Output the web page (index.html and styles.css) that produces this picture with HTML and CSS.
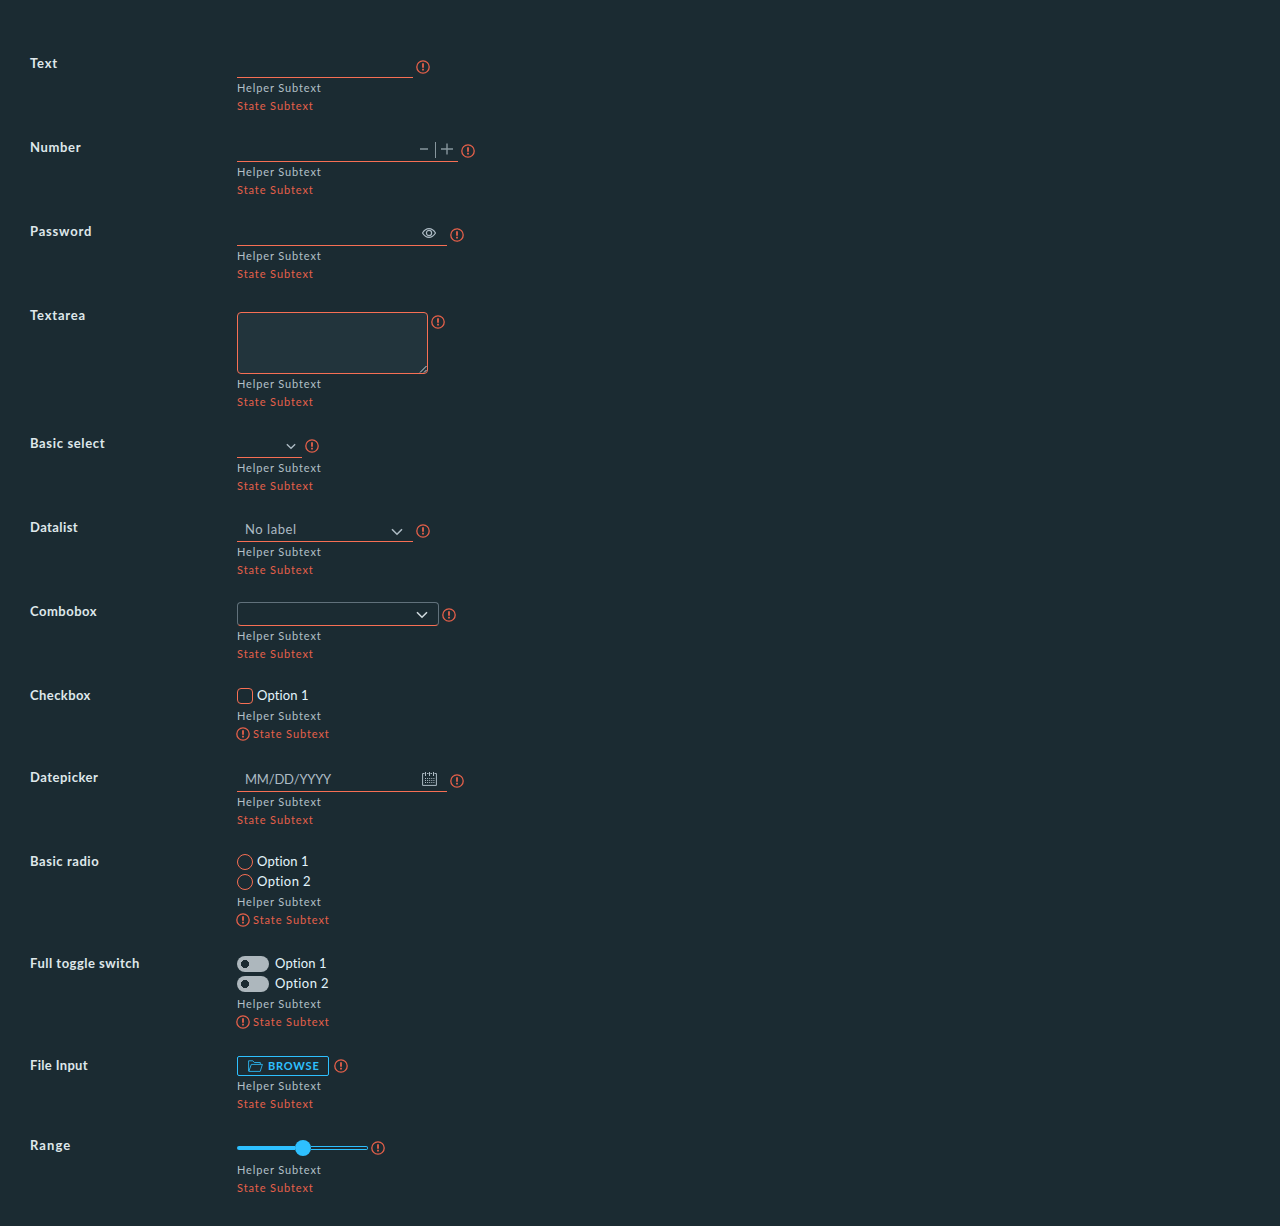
FILE: index.html
```
<!DOCTYPE html>
<html lang="en">
<head>
<meta charset="utf-8">
<title>Form controls</title>
<link rel="stylesheet" href="styles.css">
</head>
<body>
<svg class="defs" aria-hidden="true">
  <symbol id="err" viewBox="0 0 14 14"><circle cx="7" cy="7" r="6.2" fill="none" stroke="currentColor" stroke-width="1.3"/><path d="M6.1 3.3h1.8v4.4H6.1zM6.1 8.8h1.8v1.6H6.1z" fill="currentColor"/></symbol>
  <symbol id="chev" viewBox="0 0 12 8"><path d="M1 1.2l5 5 5-5" fill="none" stroke="currentColor" stroke-width="1.6"/></symbol>
</svg>
<form class="form">
  <div class="row"><label class="label w-text">Text</label><div class="field">
    <div class="control"><div class="input short"></div><svg class="err"><use href="#err"/></svg></div>
    <div class="helper">Helper Subtext</div><div class="state">State Subtext</div></div></div>

  <div class="row"><label class="label w-number">Number</label><div class="field">
    <div class="control"><div class="input number"><svg class="steps" viewBox="0 0 34 16"><path d="M1 7h8M22 7h12M28 1.5v11" fill="none" stroke="currentColor" stroke-width="1.4"/><path d="M16.5 0v16" stroke="currentColor"/></svg></div><svg class="err"><use href="#err"/></svg></div>
    <div class="helper">Helper Subtext</div><div class="state">State Subtext</div></div></div>

  <div class="row"><label class="label w-password">Password</label><div class="field">
    <div class="control"><div class="input wide"><svg class="eye" viewBox="0 0 14 10"><path d="M.5 5Q3.2.6 7 .6T13.500 5Q10.800 9.400 7 9.400T.5 5z" fill="none" stroke="currentColor" stroke-width="1.2"/><circle cx="7" cy="5" r="2.600" fill="none" stroke="currentColor" stroke-width="1.2"/></svg></div><svg class="err"><use href="#err"/></svg></div>
    <div class="helper">Helper Subtext</div><div class="state">State Subtext</div></div></div>

  <div class="row"><label class="label w-textarea">Textarea</label><div class="field">
    <div class="control area"><div class="textarea"><svg class="grip" viewBox="0 0 8 8"><path d="M1 7.500l6.500-6.500M5 7.500l2.500-2.500" stroke="currentColor"/></svg></div><svg class="err"><use href="#err"/></svg></div>
    <div class="helper">Helper Subtext</div><div class="state">State Subtext</div></div></div>

  <div class="row"><label class="label w-select">Basic select</label><div class="field">
    <div class="control"><div class="input select"><svg class="chev small"><use href="#chev"/></svg></div><svg class="err up"><use href="#err"/></svg></div>
    <div class="helper">Helper Subtext</div><div class="state">State Subtext</div></div></div>

  <div class="row"><label class="label w-datalist">Datalist</label><div class="field">
    <div class="control"><div class="input short datalist"><span class="nolabel">No label</span><svg class="chev"><use href="#chev"/></svg></div><svg class="err"><use href="#err"/></svg></div>
    <div class="helper">Helper Subtext</div><div class="state">State Subtext</div></div></div>

  <div class="row"><label class="label w-combobox">Combobox</label><div class="field">
    <div class="control"><div class="combobox"><svg class="chev"><use href="#chev"/></svg></div><svg class="err"><use href="#err"/></svg></div>
    <div class="helper">Helper Subtext</div><div class="state">State Subtext</div></div></div>

  <div class="row loose"><label class="label w-checkbox">Checkbox</label><div class="field">
    <div class="options"><div class="option"><span class="box"></span><span class="opt">Option 1</span></div></div>
    <div class="helper">Helper Subtext</div><div class="state"><svg class="lead"><use href="#err"/></svg>State Subtext</div></div></div>

  <div class="row"><label class="label w-date">Datepicker</label><div class="field">
    <div class="control"><div class="input wide"><span class="datetext">MM/DD/YYYY</span><svg class="calendar" viewBox="0 0 15 14"><path d="M2.500 1.500H.6v11.900h13.800V1.500h-1.900M5 1.500h1.500M8.500 1.500H10M3.500 0v4M7.500 0v4M11.500 0v4" fill="none" stroke="currentColor"/><path d="M3 6.500h9.500M3 8.500h9.500M3 10.500h9.500" stroke="currentColor" stroke-dasharray="1 1.100"/></svg></div><svg class="err"><use href="#err"/></svg></div>
    <div class="helper">Helper Subtext</div><div class="state">State Subtext</div></div></div>

  <div class="row loose"><label class="label w-radio">Basic radio</label><div class="field">
    <div class="options"><div class="option"><span class="box round"></span><span class="opt">Option 1</span></div><div class="option"><span class="box round"></span><span class="opt two">Option 2</span></div></div>
    <div class="helper">Helper Subtext</div><div class="state"><svg class="lead"><use href="#err"/></svg>State Subtext</div></div></div>

  <div class="row loose"><label class="label w-toggle">Full toggle switch</label><div class="field">
    <div class="options"><div class="option wider"><span class="toggle"></span><span class="opt">Option 1</span></div><div class="option wider"><span class="toggle"></span><span class="opt two">Option 2</span></div></div>
    <div class="helper">Helper Subtext</div><div class="state"><svg class="lead"><use href="#err"/></svg>State Subtext</div></div></div>

  <div class="row"><label class="label w-file">File Input</label><div class="field">
    <div class="control file"><div class="browse"><svg class="folder" viewBox="0 0 15 12"><path d="M.6 11V.8h4.200l1.500 1.700h6V4M.8 11.400l2.500-7h11.100l-2.200 7z" fill="none" stroke="currentColor" stroke-width=".85"/></svg><span class="browsetext">BROWSE</span></div><svg class="err"><use href="#err"/></svg></div>
    <div class="helper">Helper Subtext</div><div class="state">State Subtext</div></div></div>

  <div class="row"><label class="label w-range">Range</label><div class="field">
    <div class="control"><div class="range"><span class="fill"></span><span class="thumb"></span><span class="rest"></span></div><svg class="err up"><use href="#err"/></svg></div>
    <div class="helper">Helper Subtext</div><div class="state">State Subtext</div></div></div>
</form>
</body>
</html>
```
FILE: styles.css
```
* { box-sizing: border-box; }
body { margin: 0; min-height: 1226px; background: #1b2b32; color: #e3f5fc; font: 13px/20px Lato, "Open Sans", sans-serif; }
.defs { display: none; }
svg { display: block; flex: none; }
.form { padding: 54px 30px 0; }
.row { display: flex; padding-bottom: 23px; }
.row.loose { padding-bottom: 25px; }
.label { width: 207px; flex: none; font-weight: 700; line-height: 18px; letter-spacing: .5px; color: #dfe7ea; white-space: nowrap; }
.w-text, .w-password, .w-textarea { letter-spacing: .8px; }
.w-number, .w-select { letter-spacing: .65px; }
.w-datalist, .w-checkbox { letter-spacing: .42px; }
.w-radio { letter-spacing: .57px; }
.w-file { letter-spacing: .33px; }
.w-range { letter-spacing: 1.1px; }
.control { display: flex; height: 25px; gap: 3px; align-items: flex-start; }
.control.area { height: 69px; padding-top: 6px; }
.control.file { height: 21px; gap: 5px; }
.input { height: 24px; border-bottom: 1px solid #f76f54; color: #adbbc4; display: flex; justify-content: flex-end; }
.short { width: 176px; }
.wide { width: 210px; }
.number { width: 221px; }
.select { width: 65px; }
.err { width: 14px; height: 14px; margin-top: 6px; color: #e5604a; }
.err.up { margin-top: 5px; }
.area .err { margin-top: 3px; }
.file .err { margin-top: 3px; }
.helper, .state { font-size: 11px; line-height: 18px; height: 18px; white-space: nowrap; }
.helper { letter-spacing: .88px; color: #b3c0c8; }
.state { letter-spacing: .92px; color: #e5604a; display: flex; align-items: center; gap: 3px; }
.lead { width: 14px; height: 14px; margin-left: -1px; }
.steps { width: 34px; height: 16px; margin: 4px 5px 0 0; color: #87969d; }
.eye { width: 14px; height: 10px; margin: 6px 11px 0 0; }
.textarea { width: 191px; height: 62px; border: 1px solid #f76f54; border-radius: 4px; background: #22343c; display: flex; justify-content: flex-end; align-items: flex-end; }
.grip { width: 8px; height: 8px; color: #cbd4d8; }
.chev { width: 12px; height: 8px; margin: 10px 10px 0 0; }
.chev.small { width: 10px; height: 7px; margin: 9px 6px 0 0; }
.datalist { justify-content: space-between; }
.nolabel { padding: 1px 0 0 8px; letter-spacing: .55px; }
.combobox { width: 202px; height: 24px; border: 1px solid #61717b; border-bottom-color: #f76f54; border-radius: 4px; display: flex; justify-content: flex-end; color: #d0dade; }
.combobox .chev { margin-top: 8px; }
.options { padding-bottom: 1px; }
.option { display: flex; align-items: center; gap: 4px; height: 20px; }
.option.wider { gap: 6px; }
.opt { height: 20px; line-height: 18px; letter-spacing: .1px; }
.opt.two { letter-spacing: .4px; }
.box { width: 16px; height: 16px; border: 1px solid #f76f54; border-radius: 4px; }
.box.round { border-radius: 50%; }
.datetext { flex: 1; padding: 1px 0 0 8px; letter-spacing: -.2px; }
.calendar { width: 15px; height: 14px; margin: 4px 10px 0 0; }
.toggle { width: 32px; height: 16px; border-radius: 8px; background: radial-gradient(circle at 8px 8px, #1b2b32 3.800px, #adb7bd 4.300px); }
.browse { width: 92px; height: 20px; border: 1px solid #2ec0ff; border-radius: 2px; display: flex; align-items: center; gap: 5px; padding-left: 10px; color: #2ec0ff; font-size: 11px; font-weight: 700; letter-spacing: .8px; }
.folder { width: 15px; height: 12px; }
.range { width: 131px; height: 24px; display: flex; align-items: center; }
.fill { width: 58px; height: 4px; border-radius: 2px 0 0 2px; background: #2ec0ff; }
.thumb { width: 16px; height: 16px; border-radius: 50%; background: #2ec0ff; }
.rest { flex: 1; height: 4px; border: 1px solid #2ec0ff; border-left: 0; border-radius: 0 2px 2px 0; }
```
